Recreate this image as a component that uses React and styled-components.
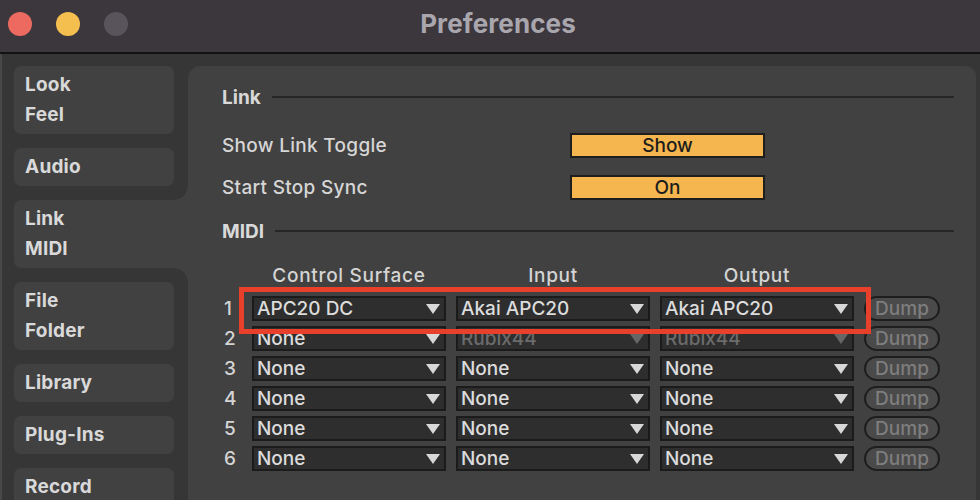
import React from "react";
import styled, { createGlobalStyle, css } from "styled-components";

const GlobalStyle = createGlobalStyle`
  html, body {
    margin: 0;
    padding: 0;
    background: #3a363c;
    font-family: Inter, "Noto Sans", "Liberation Sans", sans-serif;
  }
`;

const Window = styled.div`
  width: 980px;
  height: 500px;
  overflow: hidden;
  display: flex;
  flex-direction: column;
  background: #363636;
  border-top-left-radius: 10px;
  box-shadow: inset 2px 0 0 #484848;
`;

const TitleBar = styled.div`
  height: 52px;
  flex: none;
  display: flex;
  align-items: center;
  background: #3b373d;
  border-bottom: 2px solid #121212;
  padding-left: 8px;
`;

const Lights = styled.div`
  display: flex;
  gap: 24px;
  margin-top: -4px;
`;

const Light = styled.span`
  width: 24px;
  height: 24px;
  border-radius: 50%;
  background: ${(p) => p.$color};
`;

const Title = styled.h1`
  flex: 1;
  margin: -6px 0 0 0;
  padding-right: 112px;
  text-align: center;
  font-size: 26px;
  font-weight: 700;
  color: #aaa6ae;
  letter-spacing: 0.1px;
`;

const Body = styled.div`
  flex: 1;
  display: flex;
  padding-top: 12px;
  min-height: 0;
`;

const Sidebar = styled.nav`
  width: 174px;
  flex: none;
  padding-left: 14px;
  display: flex;
  flex-direction: column;
  gap: 14px;
`;

const Tab = styled.div`
  position: relative;
  width: 160px;
  padding: 4px 11px;
  box-sizing: border-box;
  background: #414141;
  border-radius: 7px;
  font-size: 19px;
  font-weight: 700;
  line-height: 30px;
  letter-spacing: 0.2px;
  color: #d9d9d9;

  ${(p) =>
    p.$active &&
    css`
      width: 174px;
      border-radius: 7px 0 0 7px;

      &::before,
      &::after {
        content: "";
        position: absolute;
        right: 0;
        width: 14px;
        height: 14px;
      }
      &::before {
        top: -14px;
        background: radial-gradient(circle at 0 0, #363636 13.5px, #414141 14px);
      }
      &::after {
        bottom: -14px;
        background: radial-gradient(circle at 0 100%, #363636 13.5px, #414141 14px);
      }
    `}
`;

const Panel = styled.main`
  flex: 1;
  margin-right: 4px;
  background: #414141;
  border-radius: 13px 10px 0 0;
  padding: 19px 22px 0 34px;
  display: flex;
  flex-direction: column;
  color: #d6d6d6;
`;

const SectionHead = styled.div`
  display: flex;
  align-items: center;
  gap: 11px;
  height: 24px;
  margin-top: ${(p) => p.$top || 0}px;
  font-size: 19px;
  font-weight: 700;
  color: #d9d9d9;

  &::after {
    content: "";
    flex: 1;
    height: 2px;
    background: #262626;
  }
`;

const SettingRow = styled.div`
  display: grid;
  grid-template-columns: 348px 195px;
  align-items: center;
  height: 25px;
  margin-top: ${(p) => p.$top}px;
  font-size: 19px;
  font-weight: 500;
  letter-spacing: 0.3px;
`;

const OrangeButton = styled.div`
  height: 25px;
  box-sizing: border-box;
  border: 2px solid #1e1e1e;
  background: #f6b64f;
  color: #1d1d1d;
  font-size: 19px;
  line-height: 21px;
  letter-spacing: 0;
  text-align: center;
`;

const MidiGrid = styled.div`
  margin-top: 20px;
  display: flex;
  flex-direction: column;
  gap: 5px;
`;

const GridRow = styled.div`
  position: relative;
  display: grid;
  grid-template-columns: 20px 194px 194px 194px 76px;
  column-gap: 10px;
  align-items: center;
  height: ${(p) => (p.$header ? 24 : 25)}px;
  margin-bottom: ${(p) => (p.$header ? 4 : 0)}px;
`;

const ColHead = styled.div`
  text-align: center;
  font-size: 19px;
  font-weight: 500;
  letter-spacing: 0.7px;
  color: #d4d4d4;
`;

const RowNum = styled.div`
  font-size: 19px;
  font-weight: 500;
  padding-left: 2px;
  color: #d4d4d4;
`;

const Select = styled.div`
  height: 25px;
  box-sizing: border-box;
  border: 2px solid #1b1b1b;
  background: #2e2e2e;
  display: flex;
  align-items: center;
  justify-content: space-between;
  padding: 0 4px 0 3px;
  font-size: 19px;
  font-weight: 500;
  color: ${(p) => (p.$disabled ? "#6b6b6b" : "#dcdcdc")};
  overflow: hidden;
  white-space: nowrap;
`;

const Arrow = styled.span`
  width: 0;
  height: 0;
  border-left: 7px solid transparent;
  border-right: 7px solid transparent;
  border-top: 10px solid ${(p) => (p.$disabled ? "#666" : "#d8d8d8")};
  margin-top: 1px;
`;

const DumpButton = styled.div`
  height: 25px;
  box-sizing: border-box;
  border: 2px solid #1e1e1e;
  border-radius: 13px;
  background: #4a4a4a;
  color: #7e7e7e;
  font-size: 19px;
  font-weight: 500;
  line-height: 21px;
  text-align: center;
`;

const Highlight = styled.div`
  position: absolute;
  z-index: 2;
  left: 17px;
  top: -9px;
  width: 632px;
  height: 47px;
  box-sizing: border-box;
  border: 5px solid #e8402a;
  pointer-events: none;
`;

const tabs = [
  ["Look", "Feel"],
  ["Audio"],
  ["Link", "MIDI"],
  ["File", "Folder"],
  ["Library"],
  ["Plug-Ins"],
  ["Record"],
];

const rows = [
  { cs: "APC20 DC", input: "Akai APC20", output: "Akai APC20" },
  { cs: "None", input: "Rubix44", output: "Rubix44", disabled: true },
  { cs: "None", input: "None", output: "None" },
  { cs: "None", input: "None", output: "None" },
  { cs: "None", input: "None", output: "None" },
  { cs: "None", input: "None", output: "None" },
];

function Dropdown({ value, disabled }) {
  return (
    <Select $disabled={disabled}>
      <span>{value}</span>
      <Arrow $disabled={disabled} />
    </Select>
  );
}

export default function App() {
  return (
    <>
      <GlobalStyle />
      <Window>
        <TitleBar>
          <Lights>
            <Light $color="#ec6a5f" />
            <Light $color="#f5bf4f" />
            <Light $color="#59545b" />
          </Lights>
          <Title>Preferences</Title>
        </TitleBar>
        <Body>
          <Sidebar>
            {tabs.map((t, i) => (
              <Tab key={i} $active={i === 2}>
                {t.map((line) => (
                  <div key={line}>{line}</div>
                ))}
              </Tab>
            ))}
          </Sidebar>
          <Panel>
            <SectionHead>Link</SectionHead>
            <SettingRow $top={24}>
              <span>Show Link Toggle</span>
              <OrangeButton>Show</OrangeButton>
            </SettingRow>
            <SettingRow $top={17}>
              <span>Start Stop Sync</span>
              <OrangeButton>On</OrangeButton>
            </SettingRow>
            <SectionHead $top={19}>MIDI</SectionHead>
            <MidiGrid>
              <GridRow $header>
                <span />
                <ColHead>Control Surface</ColHead>
                <ColHead>Input</ColHead>
                <ColHead>Output</ColHead>
                <span />
              </GridRow>
              {rows.map((r, i) => (
                <GridRow key={i}>
                  <RowNum>{i + 1}</RowNum>
                  <Dropdown value={r.cs} />
                  <Dropdown value={r.input} disabled={r.disabled} />
                  <Dropdown value={r.output} disabled={r.disabled} />
                  <DumpButton>Dump</DumpButton>
                  {i === 0 && <Highlight />}
                </GridRow>
              ))}
            </MidiGrid>
          </Panel>
        </Body>
      </Window>
    </>
  );
}
